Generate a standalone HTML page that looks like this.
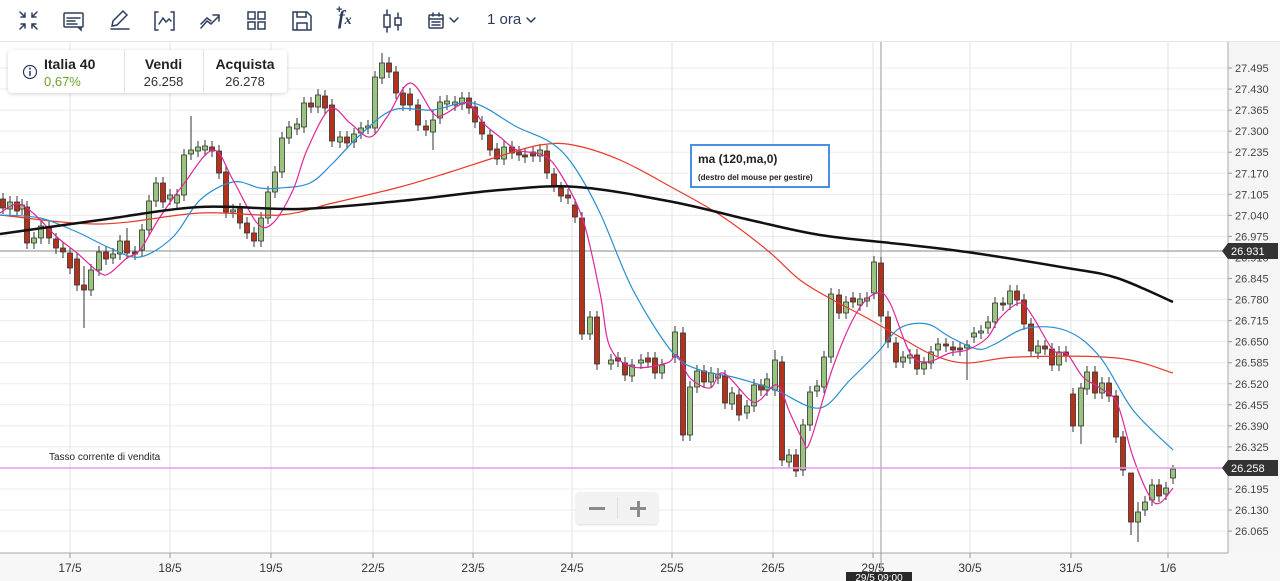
<!DOCTYPE html>
<html><head><meta charset="utf-8">
<style>
html,body{margin:0;padding:0;width:1280px;height:581px;overflow:hidden;background:#fff;font-family:"Liberation Sans",Arial,sans-serif;}
#tb{position:absolute;left:0;top:0;width:1280px;height:41px;border-bottom:1px solid #e6e6e6;background:#fff;}
#info{position:absolute;left:8px;top:50px;width:279px;height:43px;background:#fff;border-radius:4px;box-shadow:0 1px 4px rgba(0,0,0,.18);}
#info .c{position:absolute;top:6px;text-align:center;font-size:13px;color:#333;}
#info b{display:block;font-size:14px;color:#222;margin-bottom:2px;}
#tip{position:absolute;left:690px;top:144px;width:136px;height:40px;border:2px solid #4a90e2;background:#fff;}
#zoomc{position:absolute;left:576px;top:492px;width:82px;height:32px;background:#f2f2f2;border-radius:3px;box-shadow:0 1px 2px rgba(0,0,0,.15);}
</style></head><body>
<svg id="chart" width="1280" height="581" style="position:absolute;left:0;top:0"></svg>
<div id="tb">
<svg width="560" height="41" style="position:absolute;left:0;top:0" fill="none" stroke="#2b3d5c" stroke-width="1.5" stroke-linecap="round">
 <g transform="translate(19,11)"><path d="M1 1l5 5M6 2v4H2M18 1l-5 5M13 2v4h4M1 18l5-5M2 13h4v4M18 18l-5-5M17 13h-4v4"/></g>
 <g transform="translate(63,12)"><rect x="1" y="1" width="19" height="14" rx="1"/><path d="M4 6h13M4 9h8M4 12h10M15 15l3 3v-3"/></g>
 <g transform="translate(109,10)"><path d="M3 16l1-5L14 1l4 4L8 15z M2 19h18"/></g>
 <g transform="translate(154,11)"><path d="M4 1H1v18h3M17 1h3v18h-3M5 13l4-6 3 4 3-3 2 2"/></g>
 <g transform="translate(200,12)"><path d="M1 16l6-7 4 3 8-8M13 3h6v6M1 12l6-6 4 3"/></g>
 <g transform="translate(247,11)"><rect x="1" y="1" width="7" height="7"/><rect x="11" y="1" width="7" height="7"/><rect x="1" y="11" width="7" height="7"/><rect x="11" y="11" width="7" height="7"/></g>
 <g transform="translate(292,11)"><path d="M1 1h14l4 4v14H1zM5 1v5h9V1M5 19v-7h10v7"/></g>
 <g transform="translate(383,9)"><rect x="1" y="6" width="6" height="12"/><rect x="12" y="9" width="6" height="7"/><path d="M4 1v5M4 18v5M15 4v5M15 16v5"/></g>
 <g transform="translate(428,12)"><rect x="1" y="3" width="14" height="13" rx="1"/><path d="M1 7h14M5 1v3M11 1v3M4 10h8M4 13h8"/></g>
 <path d="M450 18l4 4 4-4"/>
 <path d="M527 18l4 4 4-4"/>
</svg>
<div style="position:absolute;left:338px;top:7px;font-family:'Liberation Serif',serif;font-style:italic;font-weight:bold;font-size:20px;color:#2b3d5c;">f<span style="font-size:14px">x</span></div>
<div style="position:absolute;left:336px;top:4px;font-size:11px;color:#2b3d5c;font-weight:bold">+</div>
<div style="position:absolute;left:487px;top:11px;font-size:15px;color:#2b3d5c;">1 ora</div>
</div>
<div id="info">
 <svg width="16" height="16" style="position:absolute;left:14px;top:14px"><circle cx="8" cy="8" r="6.5" fill="none" stroke="#2b3d5c" stroke-width="1.2"/><path d="M8 7v5" stroke="#2b3d5c" stroke-width="1.5"/><circle cx="8" cy="4.6" r="1" fill="#2b3d5c"/></svg>
 <div class="c" style="left:36px;text-align:left"><b>Italia 40</b><span style="color:#6aa32a">0,67%</span></div>
 <div style="position:absolute;left:116px;top:0;width:1px;height:43px;background:#e3e3e3"></div>
 <div class="c" style="left:116px;width:79px"><b>Vendi</b>26.258</div>
 <div style="position:absolute;left:195px;top:0;width:1px;height:43px;background:#e3e3e3"></div>
 <div class="c" style="left:195px;width:84px"><b>Acquista</b>26.278</div>
</div>
<div id="tip"><div style="position:absolute;left:6px;top:6px;font-size:12px;font-weight:bold;color:#222">ma (120,ma,0)</div><div style="position:absolute;left:6px;top:27px;font-size:8px;font-weight:bold;color:#222">(destro del mouse per gestire)</div></div>
<div id="zoomc"><div style="position:absolute;left:13px;top:15px;width:16px;height:3px;background:#8a8a8a"></div><div style="position:absolute;left:41px;top:5px;width:1px;height:22px;background:#ddd"></div><div style="position:absolute;left:54px;top:15px;width:16px;height:3px;background:#8a8a8a"></div><div style="position:absolute;left:60.5px;top:8.5px;width:3px;height:16px;background:#8a8a8a"></div></div>
<div style="position:absolute;left:49px;top:452px;font-size:10px;color:#222">Tasso corrente di vendita</div>
<script>
var s='';
function SM(p){var d='M'+p[0][0]+' '+p[0][1];for(var i=0;i<p.length-1;i++){var p0=p[i-1]||p[i],p1=p[i],p2=p[i+1],p3=p[i+2]||p2;
 var c1x=p1[0]+(p2[0]-p0[0])/6,c1y=p1[1]+(p2[1]-p0[1])/6,c2x=p2[0]-(p3[0]-p1[0])/6,c2y=p2[1]-(p3[1]-p1[1])/6;
 d+=' C'+c1x.toFixed(1)+' '+c1y.toFixed(1)+' '+c2x.toFixed(1)+' '+c2y.toFixed(1)+' '+p2[0]+' '+p2[1];}return d;}
s+='<rect x="1228" y="42" width="52" height="511" fill="#f5f5f5"/>';
s+='<rect x="0" y="553" width="1280" height="28" fill="#f7f7f7"/>';
for(var k=0;k<23;k++){var y=68+k*21.05;var v=(27.495-k*0.065).toFixed(3);
 s+='<line x1="0" x2="1228" y1="'+y+'" y2="'+y+'" stroke="#ececec"/>';
 s+='<line x1="1228" x2="1232" y1="'+y+'" y2="'+y+'" stroke="#999"/>';
 s+='<text x="1235" y="'+(y+4)+'" font-size="11" fill="#444">'+v+'</text>';}
var days=[[70,'17/5'],[170,'18/5'],[271,'19/5'],[373,'22/5'],[473,'23/5'],[572,'24/5'],[672,'25/5'],[773,'26/5'],[873,'29/5'],[970,'30/5'],[1071,'31/5'],[1168,'1/6']];
days.forEach(function(d){s+='<line x1="'+d[0]+'" x2="'+d[0]+'" y1="42" y2="553" stroke="#e3e3e3"/>';
 s+='<line x1="'+d[0]+'" x2="'+d[0]+'" y1="553" y2="558" stroke="#999"/>';
 s+='<text x="'+d[0]+'" y="572" font-size="12" fill="#333" text-anchor="middle">'+d[1]+'</text>';});
s+='<line x1="1228" x2="1228" y1="42" y2="553" stroke="#aaa"/>';
s+='<line x1="0" x2="1228" y1="553" y2="553" stroke="#aaa"/>';
s+='<line x1="0" x2="1228" y1="251" y2="251" stroke="#888"/>';
s+='<line x1="881" x2="881" y1="42" y2="573" stroke="#999"/>';
var C=[[3,199,208,'r'],[10,202,209,'g'],[17,202,211,'r'],[22,205,209,'g'],[27,207,243,'r'],[34,238,243,'g'],[41,226,238,'g'],[49,227,238,'r'],[56,239,248,'r'],[63,248,252,'r'],[70,253,268,'r'],[77,259,285,'r'],[84,285,290,'r',266,328],[91,270,290,'g'],[99,252,270,'g'],[106,252,259,'r'],[113,254,258,'g'],[120,241,254,'g'],[127,241,253,'r',228],[135,252,254,'r'],[142,230,250,'g'],[149,201,230,'g'],[156,183,201,'g'],[163,183,202,'r'],[170,195,199,'g'],[177,195,203,'g'],[184,155,195,'g'],[191,150,154,'g',116],[198,147,151,'g'],[205,146,150,'g'],[212,147,151,'r'],[219,151,173,'r'],[226,172,212,'r'],[233,210,212,'g'],[240,209,223,'r'],[247,223,233,'r'],[254,233,241,'r'],[261,218,241,'g'],[268,192,218,'g'],[275,172,192,'g'],[282,138,172,'g'],[289,127,138,'g'],[297,124,129,'g'],[304,103,127,'g'],[311,103,107,'r'],[318,95,107,'g'],[325,96,108,'r'],[332,105,141,'r'],[340,137,142,'g'],[347,137,143,'r'],[354,134,142,'g'],[361,128,133,'g'],[368,126,128,'g'],[375,77,128,'g'],[382,63,78,'g',53],[389,63,72,'r'],[396,72,93,'r'],[403,93,105,'r'],[410,94,105,'r'],[418,105,125,'r'],[426,126,130,'r'],[433,120,132,'g',110,150],[440,102,118,'g'],[447,101,104,'g'],[455,102,105,'g'],[462,98,104,'g'],[469,98,108,'r'],[475,107,122,'r'],[482,122,134,'r'],[490,135,150,'r'],[497,149,159,'r'],[504,147,159,'g'],[512,147,153,'r'],[519,152,155,'r'],[525,155,157,'r'],[533,152,156,'r'],[540,150,156,'g'],[547,151,173,'r'],[554,174,186,'r'],[561,188,196,'r'],[568,195,198,'r'],[575,205,217,'r'],[582,218,334,'r'],[590,317,334,'g'],[597,317,364,'r'],[611,360,364,'g'],[618,358,361,'r'],[625,363,375,'r'],[632,365,376,'g'],[641,360,363,'g'],[648,358,362,'r'],[655,358,373,'r'],[662,365,373,'g'],[675,332,357,'g'],[683,333,435,'r'],[690,387,435,'g'],[697,371,387,'g'],[704,371,382,'r'],[711,373,382,'g'],[718,374,378,'g'],[725,376,403,'r'],[732,393,404,'g'],[739,395,415,'r'],[747,406,413,'g'],[754,385,406,'g'],[761,385,390,'r'],[767,379,390,'g'],[775,360,390,'g',350],[782,362,460,'r'],[789,455,462,'g'],[796,455,471,'r'],[803,425,470,'g'],[810,392,425,'g'],[817,386,391,'g'],[824,357,387,'g'],[831,294,357,'g'],[839,295,313,'r'],[846,302,313,'g'],[853,298,302,'r'],[860,299,305,'g'],[867,298,301,'g'],[874,262,293,'g'],[881,263,316,'r'],[888,317,342,'r'],[896,343,362,'r'],[903,357,362,'g'],[910,355,358,'g'],[917,355,369,'r'],[924,363,369,'g'],[931,352,363,'g'],[938,344,350,'g'],[946,344,346,'r'],[953,347,350,'r'],[960,348,350,'r'],[967,345,348,'g',340,380],[974,333,337,'g'],[981,331,333,'g'],[988,322,328,'g'],[995,303,322,'g'],[1003,303,305,'r'],[1010,291,304,'g'],[1017,291,300,'r'],[1024,300,324,'r'],[1031,324,351,'r'],[1038,346,353,'g'],[1045,346,349,'r'],[1052,349,365,'r'],[1059,352,365,'g'],[1066,352,356,'r'],[1073,394,426,'r'],[1081,388,426,'g',383,444],[1087,372,389,'g'],[1095,372,393,'r'],[1102,383,393,'g'],[1109,383,396,'r'],[1116,396,437,'r'],[1123,437,470,'r'],[1131,473,522,'r',473,535],[1138,512,522,'g',502,542],[1145,502,510,'g'],[1152,485,500,'g'],[1159,485,496,'r'],[1166,488,494,'g'],[1173,469,478,'g',465,484]];
C.forEach(function(c){var x=c[0],t=c[1],b=c[2];if(b-t<2)b=t+2;var wt=c[4]||t-6,wb=c[5]||b+6;
 s+='<line x1="'+x+'" x2="'+x+'" y1="'+wt+'" y2="'+wb+'" stroke="#333" stroke-width="1"/>';
 s+='<rect x="'+(x-2.5)+'" y="'+t+'" width="5" height="'+(b-t)+'" fill="'+(c[3]=='g'?'#99c47f':'#b4321c')+'" stroke="#333" stroke-width="0.8"/>';});
var black=[[0,234],[100,220],[200,207],[300,209],[400,201],[500,190],[577,187],[673,202],[750,220],[820,235],[900,244],[967,252],[1067,268],[1117,278],[1173,302]];
var red=[[0,215],[100,224],[200,213],[280,215],[333,203],[400,187],[450,172],[500,156],[540,145],[573,145],[620,160],[673,188],[720,215],[767,250],[800,280],[833,300],[867,318],[900,337],[933,355],[967,363],[1017,357],[1117,358],[1173,373]];
var blue=[[0,215],[40,218],[77,232],[110,248],[140,257],[173,237],[200,200],[233,182],[260,188],[280,188],[310,183],[333,163],[360,135],[393,110],[433,110],[473,103],[517,127],[550,142],[573,165],[600,213],[633,290],[673,353],[700,370],[733,377],[767,387],[780,392],[820,408],[850,380],[877,353],[900,328],[927,324],[950,337],[977,349],[993,345],[1027,328],[1067,331],[1100,357],[1133,410],[1173,450]];
var pink=[[0,213],[17,204],[33,213],[57,237],[77,253],[100,273],[110,273],[127,258],[140,250],[160,217],[183,185],[213,150],[233,180],[257,223],[273,223],[293,190],[307,150],[330,109],[350,123],[370,137],[387,117],[410,83],[433,113],[443,115],[467,103],[483,123],[500,137],[517,150],[543,155],[560,173],[583,220],[600,293],[610,347],[633,367],[667,363],[677,355],[690,378],[710,388],[723,373],[750,400],[760,400],[777,385],[790,413],[803,440],[810,442],[833,367],[857,312],[877,293],[890,303],[910,353],[927,362],[950,353],[967,350],[987,338],[1000,318],[1020,303],[1033,317],[1053,350],[1067,354],[1083,377],[1100,388],[1117,403],[1133,457],[1150,497],[1160,503],[1173,488]];
s+='<path d="'+SM(red)+'" fill="none" stroke="#e8392b" stroke-width="1.2"/>';
s+='<path d="'+SM(blue)+'" fill="none" stroke="#2a8fd0" stroke-width="1.2"/>';
s+='<path d="'+SM(pink)+'" fill="none" stroke="#e0259a" stroke-width="1.2"/>';
s+='<path d="'+SM(black)+'" fill="none" stroke="#111" stroke-width="2.5"/>';
s+='<line x1="0" x2="1228" y1="468" y2="468" stroke="#e89ae8" stroke-width="1.5"/>';
function tag(y,t){return '<path d="M1222 '+y+'l6 -8h50v16h-50z" fill="#333"/><text x="1231" y="'+(y+4)+'" font-size="11" fill="#fff">'+t+'</text>';}
s+=tag(251,'26.931')+tag(468,'26.258');
s+='<rect x="846" y="572" width="66" height="12" fill="#2a2a2a"/><text x="879" y="581" font-size="10" fill="#fff" text-anchor="middle">29/5 09:00</text>';
document.getElementById('chart').innerHTML=s;
</script>
</body></html>
